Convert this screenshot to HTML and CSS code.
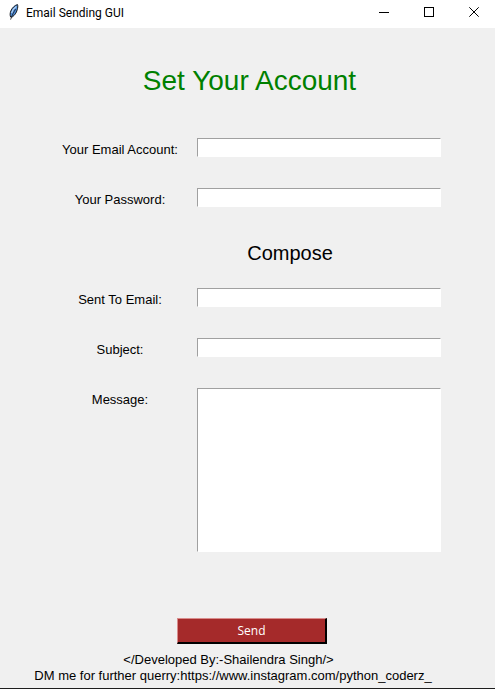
FILE: index.html
```html
<!DOCTYPE html>
<html lang="en">
<head>
<meta charset="utf-8">
<meta name="viewport" content="width=device-width, initial-scale=1">
<title>Email Sending GUI</title>
<link rel="stylesheet" href="styles.css">
</head>
<body>
<header class="titlebar">
  <svg class="feather" width="12" height="18" viewBox="0 0 12 18" aria-hidden="true">
    <path d="M9.5 0.6 C6.8 1.2 4 4 2.8 7 C1.9 9.4 2 11.4 2.6 13 L4.4 12.8 C6.6 11.4 8.4 8.8 9.2 5.8 C9.8 3.8 10 1.8 9.5 0.6Z" fill="#4a8ad8" stroke="#15181d" stroke-width="1"/>
    <path d="M8.4 2.4 C6.2 3.8 4.4 6 3.6 9" fill="none" stroke="#b9d4f2" stroke-width="1.2"/>
    <path d="M7.6 5 C5.8 8 4 11.5 2.6 15.6" fill="none" stroke="#15181d" stroke-width="0.8"/>
  </svg>
  <span class="window-name">Email Sending GUI</span>
  <div class="window-controls">
    <button type="button" class="control" aria-label="Minimize">
      <svg width="11" height="11" viewBox="0 0 11 11" shape-rendering="crispEdges"><path d="M0 5.5H10" stroke="#000"/></svg>
    </button>
    <button type="button" class="control" aria-label="Maximize">
      <svg width="11" height="11" viewBox="0 0 11 11" shape-rendering="crispEdges"><path d="M0.5 0.5H9.5V9.5H0.5Z" fill="none" stroke="#000"/></svg>
    </button>
    <button type="button" class="control" aria-label="Close">
      <svg width="11" height="11" viewBox="0 0 11 11"><path d="M0.3 0.3L9.7 9.7M9.7 0.3L0.3 9.7" stroke="#000" stroke-width="1"/></svg>
    </button>
  </div>
</header>
<main class="content">
  <h1 class="heading">Set Your Account</h1>
  <form class="form">
    <label class="label" for="account">Your Email Account:</label>
    <input class="field" id="account" type="email">
    <label class="label" for="password">Your Password:</label>
    <input class="field" id="password" type="password">
    <h2 class="subheading">Compose</h2>
    <label class="label" for="recipient">Sent To Email:</label>
    <input class="field" id="recipient" type="email">
    <label class="label" for="subject">Subject:</label>
    <input class="field" id="subject" type="text">
    <label class="label" for="message">Message:</label>
    <textarea class="field message" id="message"></textarea>
    <button class="send" type="button">Send</button>
  </form>
</main>
<footer class="credits">
  <p class="credit developer">&lt;/Developed By:-Shailendra Singh/&gt;</p>
  <p class="credit contact">DM me for further querry:https://www.instagram.com/python_coderz_</p>
</footer>
</body>
</html>
```
FILE: styles.css
```css
* {
  box-sizing: border-box;
}

body {
  margin: 0;
  min-height: 100vh;
  display: flex;
  flex-direction: column;
  background: #f0f0f0;
  border-bottom: 1px solid #1e1e1e;
  color: #000;
  font: 13px/16px "Liberation Sans", Arial, sans-serif;
}

.titlebar {
  display: flex;
  align-items: center;
  height: 28px;
  padding: 0 0 2px 8px;
  background: #fff;
}

.feather {
  margin-right: 6px;
}

.window-name {
  font: 12px/16px Roboto, "Segoe UI", sans-serif;
}

.window-controls {
  display: flex;
  margin-left: auto;
  padding-bottom: 1px;
}

.control {
  display: flex;
  align-items: center;
  justify-content: center;
  width: 45px;
  height: 24px;
  padding: 0 0 0 3px;
  border: 0;
  background: transparent;
}

.heading {
  margin: 37px 0 41px;
  padding-left: 4px;
  color: #008000;
  font-size: 28px;
  font-weight: 400;
  line-height: 32px;
  text-align: center;
}

.form {
  display: grid;
  grid-template-columns: 154px 1fr;
  grid-auto-rows: minmax(19px, auto);
  row-gap: 31px;
  padding: 0 54px 0 43px;
}

.label {
  padding-top: 4px;
  height: 19px;
  text-align: center;
}

.field {
  width: 100%;
  height: 19px;
  margin: 0;
  padding: 1px 2px;
  border: 1px solid;
  border-color: #a0a0a0 #fff #fff #a0a0a0;
  border-radius: 0;
  background: #fff;
  font: inherit;
}

.message {
  display: block;
  height: 164px;
  resize: none;
}

.subheading {
  grid-column: 2;
  height: 19px;
  margin: 0;
  padding-right: 58px;
  font-size: 20px;
  font-weight: 400;
  line-height: 30px;
  text-align: center;
}

.send {
  grid-column: 1 / -1;
  justify-self: center;
  width: 150px;
  height: 26px;
  margin: 35px 0 0 20px;
  padding: 0;
  border: 2px solid;
  border-color: #d98c8c #000 #000 #d98c8c;
  border-width: 1px 2px 2px 1px;
  background: #a52a2a;
  color: #fff;
  font: 12px/16px "Open Sans", "Segoe UI", sans-serif;
}

.credits {
  margin-top: 8px;
  text-align: center;
}

.credit {
  margin: 0;
}

.developer {
  padding-right: 38px;
}

.contact {
  padding-right: 29px;
}
```
